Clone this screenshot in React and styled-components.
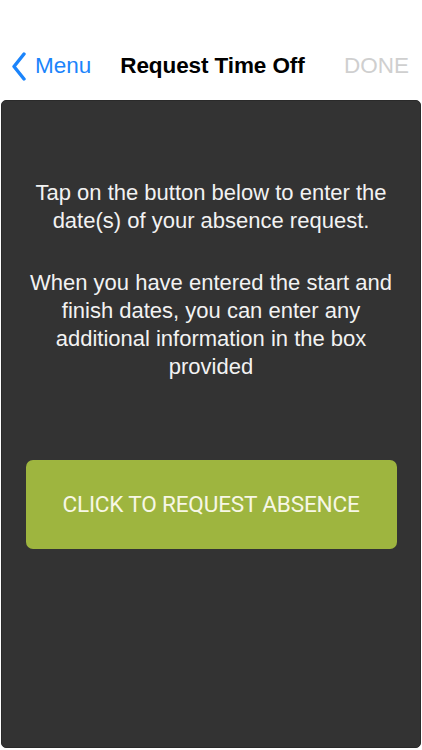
import styled, { createGlobalStyle } from 'styled-components'

const Global = createGlobalStyle`
    html, body {
        margin: 0;
        padding: 0;
        background: #ffffff;
    }
    body {
        font-family: "Liberation Sans", Arial, sans-serif;
    }
`

const Screen = styled.div`
    width: 422px;
    height: 750px;
    display: flex;
    flex-direction: column;
    background: #ffffff;
    overflow: hidden;
`

const NavBar = styled.div`
    height: 100px;
    box-sizing: border-box;
    padding: 32px 13px 0 11px;
    display: flex;
    align-items: center;
`

const Back = styled.div`
    display: flex;
    align-items: center;
    gap: 8px;
    color: #1b84fb;
    font-size: 22.5px;

    svg {
        width: 16px;
        height: 29px;
    }
`

const Title = styled.div`
    margin-left: 29px;
    font-size: 22.5px;
    font-weight: 700;
    color: #000;
    letter-spacing: -0.1px;
`

const Done = styled.div`
    margin-left: auto;
    font-size: 22.5px;
    color: #cfcfcf;
`

const Panel = styled.div`
    flex: 1;
    margin: 0 1px 2px 1px;
    background: #333333;
    border: 1px solid #2a2a2a;
    border-radius: 5px;
    padding: 78px 20px 0 20px;
    display: flex;
    flex-direction: column;
    align-items: center;
`

const Para = styled.p`
    margin: 0 0 ${props => props.gap || 0}px 0;
    color: #f2f2f2;
    font-size: 22px;
    line-height: 28px;
    text-align: center;
`

const Button = styled.button`
    margin-top: 79px;
    width: 371px;
    height: 89px;
    border: none;
    border-radius: 7px;
    background: #9eb53f;
    color: #f7f7e6;
    font-family: Roboto, "Liberation Sans", sans-serif;
    font-size: 22.6px;
    letter-spacing: -0.2px;
    cursor: pointer;
`

const App = () => {
    return (
        <Screen>
            <Global />
            <NavBar>
                <Back>
                    <svg viewBox="0 0 16 29" fill="none">
                        <path d="M13 2 L3 14.5 L13 27" stroke="#1b84fb" strokeWidth="3.4" strokeLinecap="round" strokeLinejoin="round" />
                    </svg>
                    <span>Menu</span>
                </Back>
                <Title>Request Time Off</Title>
                <Done>DONE</Done>
            </NavBar>
            <Panel>
                <Para gap={34}>Tap on the button below to enter the date(s) of your absence request.</Para>
                <Para>When you have entered the start and finish dates, you can enter any additional information in the box provided</Para>
                <Button>CLICK TO REQUEST ABSENCE</Button>
            </Panel>
        </Screen>
    )
}

export default App
